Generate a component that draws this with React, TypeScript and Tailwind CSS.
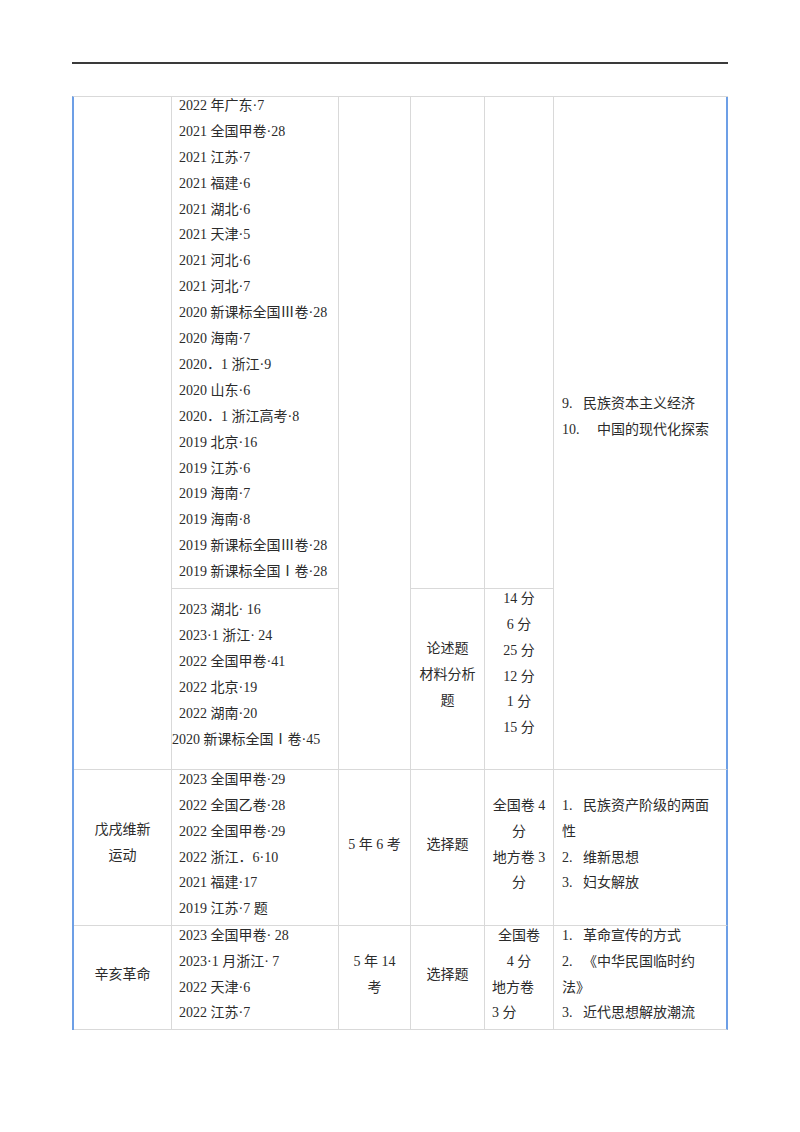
import React from 'react';

const topList = [
  '2022 年广东·7',
  '2021 全国甲卷·28',
  '2021 江苏·7',
  '2021 福建·6',
  '2021 湖北·6',
  '2021 天津·5',
  '2021 河北·6',
  '2021 河北·7',
  '2020 新课标全国Ⅲ卷·28',
  '2020 海南·7',
  '2020．1 浙江·9',
  '2020 山东·6',
  '2020．1 浙江高考·8',
  '2019 北京·16',
  '2019 江苏·6',
  '2019 海南·7',
  '2019 海南·8',
  '2019 新课标全国Ⅲ卷·28',
  '2019 新课标全国Ⅰ卷·28',
];

const essayList = ['2023 湖北· 16', '2023·1 浙江· 24', '2022 全国甲卷·41', '2022 北京·19', '2022 湖南·20'];

const essayScores = ['14 分', '6 分', '25 分', '12 分', '1 分', '15 分'];

const wuxuList = ['2023 全国甲卷·29', '2022 全国乙卷·28', '2022 全国甲卷·29', '2022 浙江．6·10', '2021 福建·17', '2019 江苏·7 题'];

const xinhaiList = ['2023 全国甲卷· 28', '2023·1 月浙江· 7', '2022 天津·6', '2022 江苏·7'];

const Cell: React.FC<{ className?: string; children?: React.ReactNode }> = ({ className = '', children }) => (
  <div className={`border-r border-b border-[#d9d9d9] flex flex-col ${className}`}>{children}</div>
);

const LastCell: React.FC<{ className?: string; children?: React.ReactNode }> = ({ className = '', children }) => (
  <div className={`border-b border-[#d9d9d9] border-r-2 border-r-[#6d9fe6] flex flex-col ${className}`}>{children}</div>
);

// numbered point with the gap after the number
const Point: React.FC<{ n: string; wide?: boolean; children: React.ReactNode }> = ({ n, wide, children }) => (
  <div>
    <span className={wide ? 'inline-block w-[35px]' : 'inline-block w-[21px]'}>{n}</span>
    {children}
  </div>
);

export default function App() {
  return (
    <div className="w-[800px] h-[1132px] bg-white px-[72px] pt-[62px] text-[14px] leading-[25.9px] text-[#2b2b2b] font-['Liberation_Serif','Noto_Sans_CJK_SC',serif]">
      <div className="h-[2px] bg-[#3a3a3a]" />

      <div className="mt-[32px] grid grid-cols-[98px_167px_72px_74px_69px_174px] grid-rows-[492px_181px_156px_104px] border-t border-[#d9d9d9] border-l-2 border-l-[#6d9fe6]">
        {/* continuation row */}
        <Cell className="row-span-2" />
        <Cell className="justify-center pl-[7px] pb-[7px] whitespace-nowrap">
          {topList.map((t) => (
            <div key={t}>{t}</div>
          ))}
        </Cell>
        <Cell className="row-span-2" />
        <Cell />
        <Cell />
        <LastCell className="row-span-2 justify-center pl-[8px] pb-[33px]">
          <Point n="9.">民族资本主义经济</Point>
          <Point n="10." wide>
            中国的现代化探索
          </Point>
        </LastCell>

        <Cell className="justify-center pl-[7px] pb-[8px] whitespace-nowrap">
          {essayList.map((t) => (
            <div key={t}>{t}</div>
          ))}
          <div className="-ml-[7px]">2020 新课标全国Ⅰ卷·45</div>
        </Cell>
        <Cell className="justify-center items-center pb-[8px]">
          <div>论述题</div>
          <div>材料分析</div>
          <div>题</div>
        </Cell>
        <Cell className="justify-center items-center pb-[31px]">
          {essayScores.map((s) => (
            <div key={s}>{s}</div>
          ))}
        </Cell>

        {/* 戊戌维新运动 */}
        <Cell className="justify-center items-center pb-[10px]">
          <div>戊戌维新</div>
          <div>运动</div>
        </Cell>
        <Cell className="justify-center pl-[7px] pb-[6px] whitespace-nowrap">
          {wuxuList.map((t) => (
            <div key={t}>{t}</div>
          ))}
        </Cell>
        <Cell className="justify-center items-center pb-[6px]">
          <div>5 年 6 考</div>
        </Cell>
        <Cell className="justify-center items-center pb-[6px]">
          <div>选择题</div>
        </Cell>
        <Cell className="justify-center items-center pb-[6px]">
          <div>全国卷 4</div>
          <div>分</div>
          <div>地方卷 3</div>
          <div>分</div>
        </Cell>
        <LastCell className="justify-center pl-[8px] pb-[6px] whitespace-nowrap">
          <Point n="1.">民族资产阶级的两面</Point>
          <div>性</div>
          <Point n="2.">维新思想</Point>
          <Point n="3.">妇女解放</Point>
        </LastCell>

        {/* 辛亥革命 */}
        <Cell className="justify-center items-center pb-[6px]">
          <div>辛亥革命</div>
        </Cell>
        <Cell className="justify-center pl-[7px] pb-[6px] whitespace-nowrap">
          {xinhaiList.map((t) => (
            <div key={t}>{t}</div>
          ))}
        </Cell>
        <Cell className="justify-center items-center pb-[6px]">
          <div>5 年 14</div>
          <div>考</div>
        </Cell>
        <Cell className="justify-center items-center pb-[6px]">
          <div>选择题</div>
        </Cell>
        <Cell className="justify-center pb-[6px] whitespace-nowrap">
          <div className="text-center">全国卷</div>
          <div className="text-center">4 分</div>
          <div className="pl-[7px]">地方卷</div>
          <div className="pl-[7px]">3 分</div>
        </Cell>
        <LastCell className="justify-center pl-[8px] pb-[6px] whitespace-nowrap">
          <Point n="1.">革命宣传的方式</Point>
          <Point n="2.">《中华民国临时约</Point>
          <div>法》</div>
          <Point n="3.">近代思想解放潮流</Point>
        </LastCell>
      </div>
    </div>
  );
}
